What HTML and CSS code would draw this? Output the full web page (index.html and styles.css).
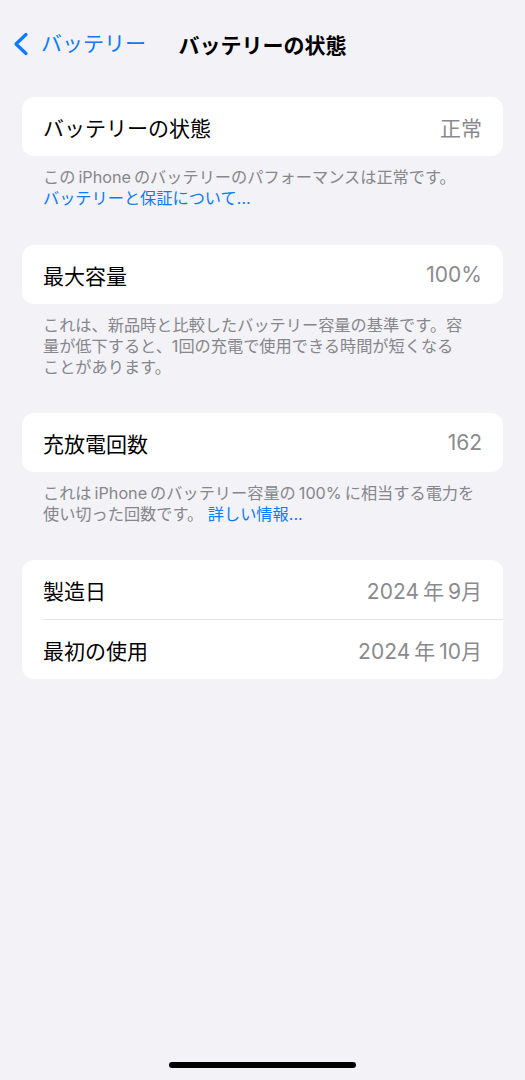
FILE: index.html
```html
<!DOCTYPE html>
<html lang="ja">
<head>
<meta charset="utf-8">
<title>バッテリーの状態</title>
<link rel="stylesheet" href="styles.css">
</head>
<body>
<div class="screen">
  <header class="nav">
    <div class="back">
      <svg class="chev" width="17" height="24" viewBox="0 0 17 24"><polyline points="14,2.5 4,12 14,21.5" fill="none" stroke="#0a7aff" stroke-width="3.2" stroke-linecap="round" stroke-linejoin="round"/></svg>
      <span class="back-label">バッテリー</span>
    </div>
    <h1 class="title">バッテリーの状態</h1>
    <div></div>
  </header>

  <main class="content">
    <section class="section">
      <div class="card">
        <div class="row"><span class="label">バッテリーの状態</span><span class="value">正常</span></div>
      </div>
      <p class="footer">この<span class="lat">iPhone</span>のバッテリーのパフォーマンスは正常です。<br><span class="link">バッテリーと保証について...</span></p>
    </section>

    <section class="section">
      <div class="card">
        <div class="row"><span class="label">最大容量</span><span class="value">100%</span></div>
      </div>
      <p class="footer">これは、新品時と比較したバッテリー容量の基準です。容<br>量が低下すると、1回の充電で使用できる時間が短くなる<br>ことがあります。</p>
    </section>

    <section class="section">
      <div class="card">
        <div class="row"><span class="label">充放電回数</span><span class="value">162</span></div>
      </div>
      <p class="footer">これは<span class="lat">iPhone</span>のバッテリー容量の<span class="lat">100%</span>に相当する電力を<br>使い切った回数です。 <span class="link">詳しい情報...</span></p>
    </section>

    <section class="section">
      <div class="card">
        <div class="row"><span class="label">製造日</span><span class="value">2024<span class="gap"></span>年<span class="gap"></span>9月</span></div>
        <div class="sep"></div>
        <div class="row"><span class="label">最初の使用</span><span class="value">2024<span class="gap"></span>年<span class="gap"></span>10月</span></div>
      </div>
    </section>
  </main>

  <div class="home"></div>
</div>
</body>
</html>
```

FILE: styles.css
```css
* { box-sizing: border-box; }

html, body {
  margin: 0;
  padding: 0;
  background: #f2f2f7;
}

body {
  font-family: Inter, "Noto Sans CJK JP", sans-serif;
  color: #000;
}

.screen {
  height: 1080px;
  display: flex;
  flex-direction: column;
}

.nav {
  margin-top: 20px;
  height: 48px;
  display: grid;
  grid-template-columns: 1fr auto 1fr;
  align-items: center;
}

.back {
  display: flex;
  align-items: center;
  padding-left: 12px;
  gap: 12px;
  color: #0a7aff;
}

.chev { display: block; }

.back-label {
  font-size: 21px;
  line-height: 26px;
}

.title {
  margin: 0;
  font-size: 21px;
  line-height: 26px;
  font-weight: 700;
  font-family: "Noto Sans CJK JP", sans-serif;
}

.content {
  padding: 29px 22px 0 22px;
  display: flex;
  flex-direction: column;
  gap: 35px;
}

.section:first-child + .section { margin-top: 1px; }

.card {
  background: #fff;
  border-radius: 12px;
  overflow: hidden;
}

.row {
  height: 59px;
  padding: 0 21px;
  display: flex;
  align-items: center;
  justify-content: space-between;
}

.label {
  font-size: 21px;
  font-family: "Noto Sans CJK JP", sans-serif;
}

.value {
  font-size: 21px;
  color: #8a8a8e;
}

.sep {
  height: 1px;
  background: #e3e3e8;
  margin-left: 21px;
}

.footer {
  margin: 0;
  padding: 11px 21px 0 21px;
  font-size: 16.2px;
  line-height: 21px;
  color: #86868b;
  white-space: nowrap;
}

.lat { margin: 0 3px; }

.gap { display: inline-block; width: 4px; }

.link { color: #0a7aff; }

.home {
  margin-top: auto;
  margin-bottom: 12px;
  align-self: center;
  width: 187px;
  height: 6px;
  border-radius: 3px;
  background: #000;
}
```
